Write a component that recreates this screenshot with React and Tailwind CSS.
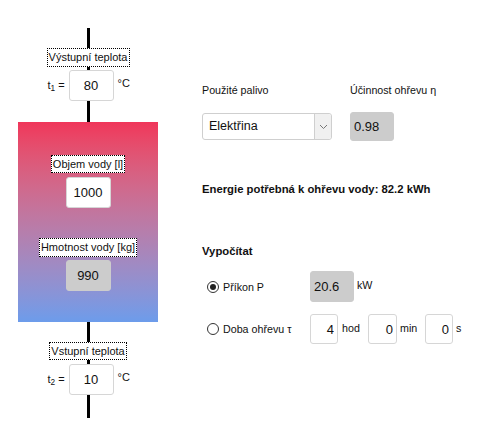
import React from 'react';

const VLine = ({ h }) => <div className={`w-[3px] bg-black ${h}`} />;

function TagLabel({ children, size }) {
  return (
    <div className={`border border-dotted border-black bg-white text-[11px] leading-[16px] text-center whitespace-nowrap ${size}`}>
      {children}
    </div>
  );
}

function Box({ value, gray, size = 'w-[45px] h-[31px]', align = 'text-center' }) {
  return (
    <input
      readOnly
      value={value}
      className={`${size} ${align} ${gray ? 'bg-[#cccccc] border-[#cccccc]' : 'bg-white border-[#d6d6d6]'} border rounded-[3px] text-[13px] text-[#111] outline-none px-[3px]`}
    />
  );
}

function TempRow({ sub, value }) {
  return (
    <div className="flex items-start h-[31px] w-full justify-center text-[11px] leading-[14px]">
      <span className="mt-[8px] w-[17px] whitespace-nowrap">
        t<sub>{sub}</sub> =
      </span>
      <span className="ml-[4px]">
        <Box value={value} size="w-[45px] h-[31px]" />
      </span>
      <span className="ml-[4px] w-[11px] mt-[6px] whitespace-nowrap">°C</span>
    </div>
  );
}

function Radio({ checked, label }) {
  return (
    <div className="w-[108px] flex items-center pl-[5px] self-center">
      <span className="w-[12px] h-[12px] rounded-full border border-[#333] flex items-center justify-center bg-white">
        {checked && <span className="w-[6px] h-[6px] rounded-full bg-[#222]" />}
      </span>
      <span className="ml-[4px] whitespace-nowrap">{label}</span>
    </div>
  );
}

export default function App() {
  return (
    <div className="w-[493px] h-[425px] bg-white flex font-['Liberation_Sans',Arial,sans-serif] text-[#111] overflow-hidden">
      <div className="w-[176px] flex flex-col items-center shrink-0">
        <div className="h-[28px]" />
        <VLine h="h-[20px]" />
        <TagLabel size="w-[83px] h-[19px]">Výstupní teplota</TagLabel>
        <VLine h="h-[3px]" />
        <TempRow sub="1" value="80" />
        <VLine h="h-[21px]" />
        <div className="w-[140px] h-[200px] bg-gradient-to-b from-[#f0355a] to-[#6c9ceb] flex flex-col items-center pt-[33px]">
          <TagLabel size="w-[74px] h-[18px]">Objem vody [l]</TagLabel>
          <div className="mt-[4px]"><Box value="1000" /></div>
          <div className="mt-[30px]"><TagLabel size="w-[98px] h-[19px]">Hmotnost vody [kg]</TagLabel></div>
          <div className="mt-[3px]"><Box value="990" gray /></div>
        </div>
        <VLine h="h-[20px]" />
        <TagLabel size="w-[78px] h-[18px]">Vstupní teplota</TagLabel>
        <VLine h="h-[4px]" />
        <TempRow sub="2" value="10" />
        <VLine h="h-[23px]" />
      </div>

      <div className="ml-[26px] pt-[83px] flex flex-col text-[10.7px] leading-[14px]">
        <div className="flex">
          <span className="w-[148px]">Použité palivo</span>
          <span>Účinnost ohřevu η</span>
        </div>
        <div className="flex items-center mt-[15px]">
          <div className="w-[130px] h-[27px] border border-[#cfcfcf] rounded-[3px] flex bg-white">
            <span className="flex-1 pl-[6px] text-[12.5px] leading-[25px]">Elektřina</span>
            <span className="w-[17px] border-l border-[#cfcfcf] bg-[#f0f0f0] flex items-center justify-center rounded-r-[3px]">
              <svg width="9" height="6" viewBox="0 0 9 6"><path d="M1 1l3.5 3.5L8 1" fill="none" stroke="#777" strokeWidth="1" /></svg>
            </span>
          </div>
          <div className="ml-[18px]">
            <Box value="0.98" gray size="w-[44px] h-[29px]" align="text-left" />
          </div>
        </div>
        <div className="mt-[41px] font-bold text-[11.3px]">Energie potřebná k ohřevu vody: 82.2 kWh</div>
        <div className="mt-[48px] font-bold text-[11.3px]">Vypočítat</div>
        <div className="flex items-start mt-[13px]">
          <Radio checked label="Příkon P" />
          <Box value="20.6" gray size="w-[44px] h-[31px]" align="text-left" />
          <span className="ml-[3px] mt-[7px]">kW</span>
        </div>
        <div className="flex items-start mt-[12px]">
          <Radio label="Doba ohřevu τ" />
          <Box value="4" size="w-[28px] h-[30px]" align="text-right" />
          <span className="w-[30px] pl-[4px] mt-[7px]">hod</span>
          <Box value="0" size="w-[29px] h-[30px]" align="text-right" />
          <span className="w-[28px] pl-[3px] mt-[7px]">min</span>
          <Box value="0" size="w-[28px] h-[30px]" align="text-right" />
          <span className="pl-[3px] mt-[7px]">s</span>
        </div>
      </div>
    </div>
  );
}
